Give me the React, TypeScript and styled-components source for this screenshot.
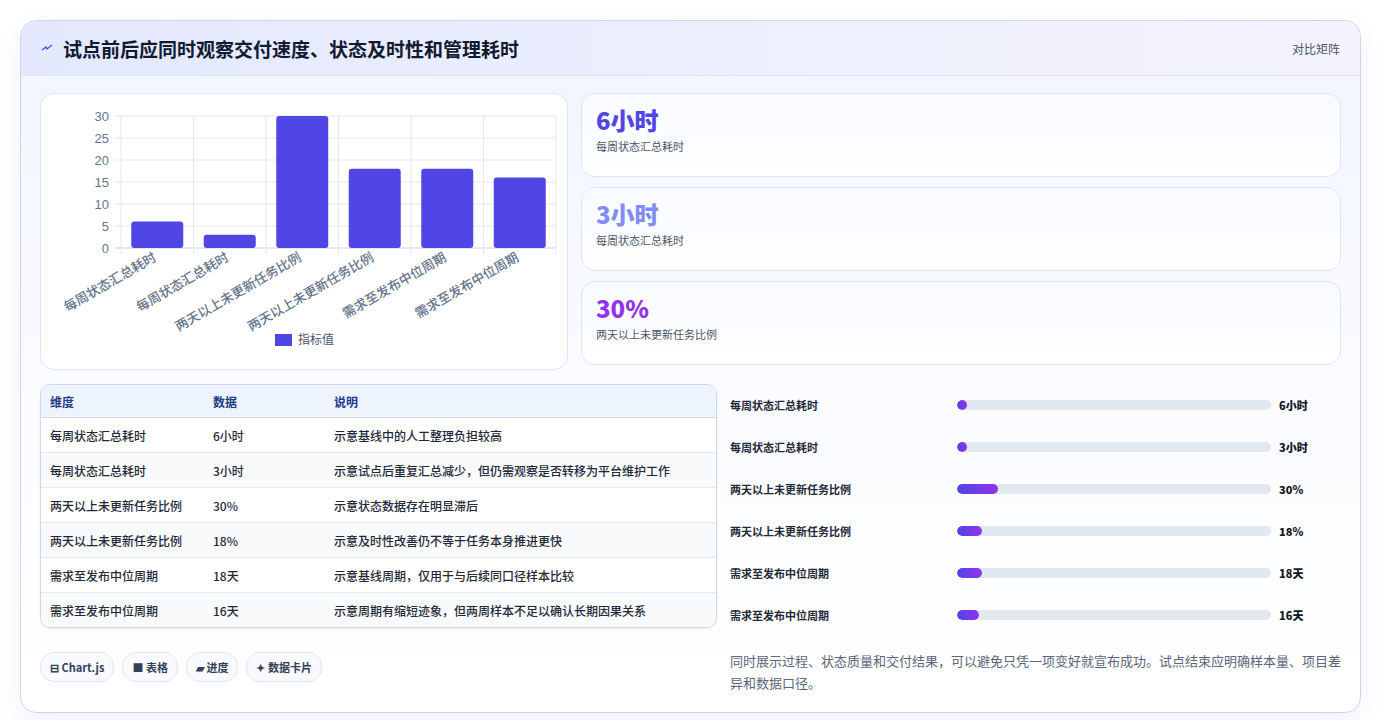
import styled, { createGlobalStyle } from "styled-components";

const GlobalStyle = createGlobalStyle`
  body {
    margin: 0;
    background: #ffffff;
    font-family: "Noto Sans CJK SC", "Noto Sans", sans-serif;
  }
`;

const metrics = [
  { name: "每周状态汇总耗时", value: 6, label: "6小时", note: "示意基线中的人工整理负担较高", bar: 3 },
  { name: "每周状态汇总耗时", value: 3, label: "3小时", note: "示意试点后重复汇总减少，但仍需观察是否转移为平台维护工作", bar: 3 },
  { name: "两天以上未更新任务比例", value: 30, label: "30%", note: "示意状态数据存在明显滞后", bar: 13 },
  { name: "两天以上未更新任务比例", value: 18, label: "18%", note: "示意及时性改善仍不等于任务本身推进更快", bar: 8 },
  { name: "需求至发布中位周期", value: 18, label: "18天", note: "示意基线周期，仅用于与后续同口径样本比较", bar: 8 },
  { name: "需求至发布中位周期", value: 16, label: "16天", note: "示意周期有缩短迹象，但两周样本不足以确认长期因果关系", bar: 7 },
];

const Page = styled.div`
  padding: 20px 20px 22px 20px;
`;

const Panel = styled.section`
  border: 1px solid #cdd5f6;
  border-radius: 16px;
  overflow: hidden;
  background: linear-gradient(180deg, #f2f4ff 0%, #fbfcff 60%, #ffffff 100%);
  box-shadow: 0 8px 24px rgba(79, 70, 229, 0.08);
`;

const Header = styled.header`
  height: 54px;
  display: flex;
  align-items: center;
  justify-content: space-between;
  padding: 0 20px;
  background: linear-gradient(90deg, #e3e8fd 0%, #eef0fd 60%, #f3f2fd 100%);
  border-bottom: 1px solid #dde3f8;
`;

const Title = styled.h1`
  margin: 0;
  display: flex;
  align-items: center;
  gap: 10px;
  font-size: 19px;
  font-weight: 700;
  color: #111a33;
`;

const HeaderTag = styled.span`
  font-size: 12px;
  color: #4b5568;
`;

const Body = styled.div`
  padding: 17px 19px 18px 19px;
  display: flex;
  flex-direction: column;
  gap: 14px;
`;

const TopRow = styled.div`
  display: grid;
  grid-template-columns: 528px 1fr;
  gap: 13px;
`;

const Card = styled.div`
  background: #ffffff;
  border: 1px solid #dfe5f4;
  border-radius: 14px;
`;

const ChartCard = styled(Card)`
  height: 275px;
`;

const KpiList = styled.div`
  display: flex;
  flex-direction: column;
  gap: 10px;
`;

const Kpi = styled(Card)`
  height: 84px;
  box-sizing: border-box;
  padding: 10px 14px;
  background: linear-gradient(180deg, #f8faff 0%, #ffffff 100%);
`;

const KpiValue = styled.div<{ $color: string }>`
  font-size: 24px;
  font-weight: 800;
  line-height: 32px;
  color: ${(p) => p.$color};
`;

const KpiLabel = styled.div`
  font-size: 11px;
  color: #4b5568;
  margin-top: 2px;
`;

const BottomRow = styled.div`
  display: grid;
  grid-template-columns: 677px 1fr;
  gap: 13px;
`;

const LeftCol = styled.div`
  display: flex;
  flex-direction: column;
  gap: 24px;
`;

const Table = styled.table`
  width: 100%;
  border-collapse: separate;
  border-spacing: 0;
  border: 1px solid #cfd8ea;
  border-radius: 10px;
  overflow: hidden;
  font-size: 12px;
  box-shadow: 0 1px 2px rgba(15, 23, 42, 0.08);

  th {
    text-align: left;
    height: 32px;
    padding: 0 9px;
    background: #eef4fe;
    color: #1e3a8a;
    font-weight: 700;
    border-bottom: 1px solid #cfd8ea;
  }
  td {
    height: 34px;
    padding: 0 9px;
    color: #1f2937;
    font-weight: 500;
    border-bottom: 1px solid #e2e8f0;
  }
  tr:last-child td {
    border-bottom: none;
  }
  tbody tr:nth-child(odd) td {
    background: #ffffff;
  }
  tbody tr:nth-child(even) td {
    background: #f8fafc;
  }
`;

const Chips = styled.div`
  display: flex;
  gap: 8px;
`;

const Chip = styled.span`
  height: 28px;
  display: inline-flex;
  align-items: center;
  padding: 0 9px;
  border: 1px solid #dfe5f4;
  border-radius: 14px;
  background: #f8faff;
  font-size: 11px;
  font-weight: 700;
  color: #334155;
`;

const BarList = styled.div`
  display: flex;
  flex-direction: column;
`;

const BarRow = styled.div`
  display: grid;
  grid-template-columns: 227px 314px 1fr;
  align-items: center;
  gap: 0;
  height: 42px;
`;

const BarName = styled.span`
  font-size: 11px;
  font-weight: 700;
  color: #1f2937;
`;

const Track = styled.div`
  height: 10px;
  border-radius: 5px;
  background: #e2e8f0;
  overflow: hidden;
`;

const Fill = styled.div`
  height: 100%;
  min-width: 10px;
  border-radius: 5px;
  background: linear-gradient(90deg, #4f46e5, #9333ea);
`;

const BarValue = styled.span`
  padding-left: 8px;
  font-size: 11px;
  font-weight: 800;
  color: #111827;
`;

const Note = styled.p`
  margin: 14px 0 0 0;
  font-size: 13px;
  line-height: 22px;
  color: #5b6578;
`;

function BarChart() {
  const left = 80;
  const right = 515;
  const top = 22;
  const bottom = 154;
  const step = (right - left) / 6;
  const scale = (bottom - top) / 30;
  return (
    <svg width="527" height="275" viewBox="0 0 527 275">
      {[0, 5, 10, 15, 20, 25, 30].map((t) => {
        const y = bottom - t * scale;
        return (
          <g key={t}>
            <line x1={left - 6} x2={right} y1={y} y2={y} stroke={t === 0 ? "#cbd5e1" : "#e5e7eb"} />
            <text x={left - 12} y={y + 4.5} textAnchor="end" fontSize="13" fill="#64748b" fontFamily="Liberation Sans, sans-serif">
              {t}
            </text>
          </g>
        );
      })}
      {Array.from({ length: 7 }).map((_, i) => (
        <line key={i} x1={left + step * i} x2={left + step * i} y1={top} y2={bottom + 6} stroke="#e5e7eb" />
      ))}
      {metrics.map((m, i) => {
        const cx = left + step * (i + 0.5);
        const h = m.value * scale;
        return (
          <g key={i}>
            <rect x={cx - 26} y={bottom - h} width="52" height={h} rx="3" fill="#4f46e5" />
            <text
              x={cx}
              y={166}
              textAnchor="end"
              fontSize="13"
              fill="#64748b"
              fontWeight="500"
              transform={`rotate(-30 ${cx} 166)`}
            >
              {m.name}
            </text>
          </g>
        );
      })}
      <rect x="234" y="240" width="17" height="12" fill="#4f46e5" />
      <text x="257" y="250" fontSize="12" fill="#4b5568">
        指标值
      </text>
    </svg>
  );
}

export default function App() {
  return (
    <Page>
      <GlobalStyle />
      <Panel>
        <Header>
          <Title>
            <svg width="12" height="10" viewBox="0 0 12 10">
              <path d="M1 7 L5 4 L6 6 L11 2" stroke="#3b5bdb" strokeWidth="1.4" fill="none" />
            </svg>
            试点前后应同时观察交付速度、状态及时性和管理耗时
          </Title>
          <HeaderTag>对比矩阵</HeaderTag>
        </Header>
        <Body>
          <TopRow>
            <ChartCard>
              <BarChart />
            </ChartCard>
            <KpiList>
              <Kpi>
                <KpiValue $color="#4f46e5">6小时</KpiValue>
                <KpiLabel>每周状态汇总耗时</KpiLabel>
              </Kpi>
              <Kpi>
                <KpiValue $color="#818cf8">3小时</KpiValue>
                <KpiLabel>每周状态汇总耗时</KpiLabel>
              </Kpi>
              <Kpi>
                <KpiValue $color="#9333ea">30%</KpiValue>
                <KpiLabel>两天以上未更新任务比例</KpiLabel>
              </Kpi>
            </KpiList>
          </TopRow>
          <BottomRow>
            <LeftCol>
              <Table>
                <thead>
                  <tr>
                    <th style={{ width: 145 }}>维度</th>
                    <th style={{ width: 103 }}>数据</th>
                    <th>说明</th>
                  </tr>
                </thead>
                <tbody>
                  {metrics.map((m, i) => (
                    <tr key={i}>
                      <td>{m.name}</td>
                      <td>{m.label}</td>
                      <td>{m.note}</td>
                    </tr>
                  ))}
                </tbody>
              </Table>
              <Chips>
                <Chip>⊟ Chart.js</Chip>
                <Chip>■ 表格</Chip>
                <Chip>▰ 进度</Chip>
                <Chip>✦ 数据卡片</Chip>
              </Chips>
            </LeftCol>
            <BarList>
              {metrics.map((m, i) => (
                <BarRow key={i}>
                  <BarName>{m.name}</BarName>
                  <Track>
                    <Fill style={{ width: `${m.bar}%` }} />
                  </Track>
                  <BarValue>{m.label}</BarValue>
                </BarRow>
              ))}
              <Note>同时展示过程、状态质量和交付结果，可以避免只凭一项变好就宣布成功。试点结束应明确样本量、项目差异和数据口径。</Note>
            </BarList>
          </BottomRow>
        </Body>
      </Panel>
    </Page>
  );
}
